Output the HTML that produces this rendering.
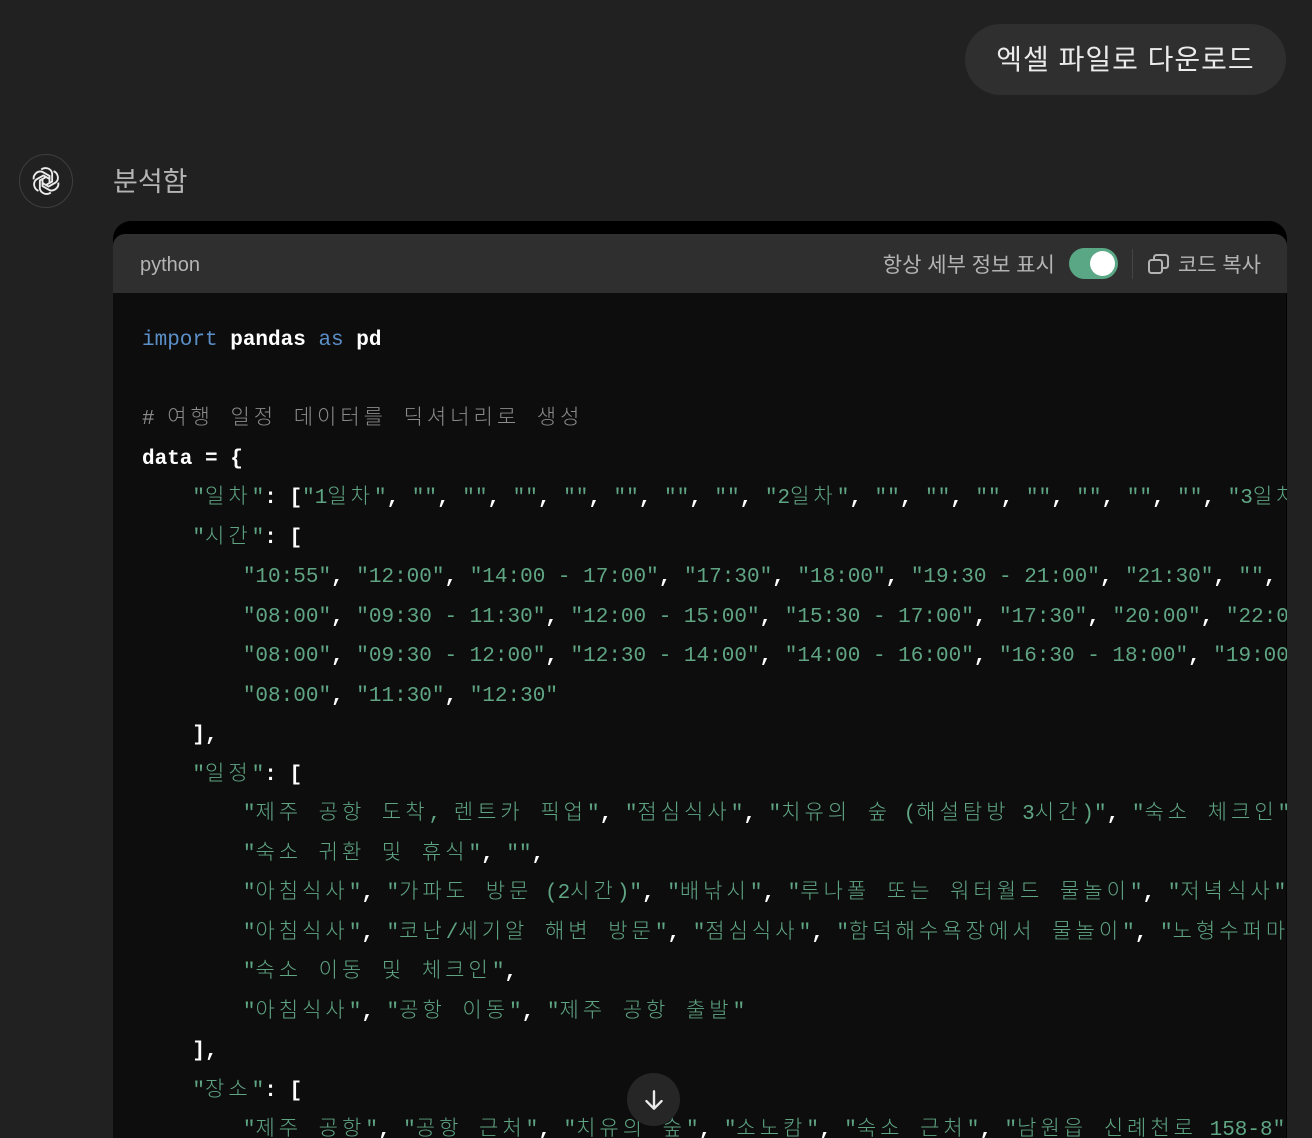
<!DOCTYPE html>
<html><head><meta charset="utf-8"><style>
html,body{margin:0;padding:0;background:#212121;width:1312px;height:1138px;overflow:hidden;font-family:"Liberation Sans","Noto Sans CJK KR",sans-serif;}
.bubble{position:absolute;left:965px;top:24px;width:321px;height:71px;border-radius:36px;background:#2f2f2f;color:#ececec;font-size:28px;line-height:71px;text-align:center;letter-spacing:1px}
.avatar{position:absolute;left:19px;top:154px;width:54px;height:54px;border-radius:50%;border:1px solid #3e3e3e;box-sizing:border-box;display:flex;align-items:center;justify-content:center}
.analyzed{position:absolute;left:113px;top:162px;color:#b4b4b4;font-size:27px;line-height:40px}
.box{position:absolute;left:113px;top:221px;width:1174px;height:917px;background:#000;border-radius:18px 18px 0 0;overflow:hidden}
.hdr{position:absolute;left:0;top:13px;width:1174px;height:59px;background:#2f2f2f;border-radius:12px 12px 0 0}
.lang{position:absolute;left:27px;top:2px;line-height:59px;color:#b4b4b4;font-size:20px}
.right{position:absolute;right:26px;top:0;height:59px;display:flex;align-items:center;color:#b4b4b4;font-size:21px}
.tog{width:49px;height:31px;border-radius:16px;background:#5aa786;position:relative;margin-left:14px}
.tog::after{content:"";position:absolute;right:3px;top:3px;width:25px;height:25px;border-radius:50%;background:#fff}
.sep{width:1px;height:30px;background:#454545;margin:0 14px}
.body{position:absolute;left:0;top:72px;width:1173px;height:900px;background:#0d0d0d}
pre{margin:0;position:absolute;left:29px;top:28px;font-family:"Liberation Mono","Noto Sans CJK KR",monospace;font-size:21px;line-height:39.5px;color:#fff;font-weight:bold;white-space:pre}
.s{color:#5fa584;font-weight:normal}.c{color:#8b8b8b;font-weight:normal}.kw{color:#5b8fc7;font-weight:normal}
.k{letter-spacing:4px;font-weight:300}
.down{position:absolute;left:627px;top:1073px;width:53px;height:53px;border-radius:50%;background:#262626;display:flex;align-items:center;justify-content:center}
</style></head><body>
<div class="bubble">엑셀 파일로 다운로드</div>
<div class="avatar"><svg width="32" height="32" viewBox="-12 -12 24 24" fill="none" stroke="#ececec" stroke-width="1.4" stroke-linejoin="round"><g id="p"><path d="M-3.6-8.6c2.8-2.2 7.4-1 8.2 2.8v6.2l-4.4 2.5"/></g><use href="#p" transform="rotate(60)"/><use href="#p" transform="rotate(120)"/><use href="#p" transform="rotate(180)"/><use href="#p" transform="rotate(240)"/><use href="#p" transform="rotate(300)"/></svg></div>
<div class="analyzed">분석함</div>
<div class="box">
<div class="hdr"><div class="lang">python</div>
<div class="right">항상 세부 정보 표시<div class="tog"></div><div class="sep"></div>
<svg width="24" height="24" viewBox="0 0 24 24" fill="none" stroke="#b4b4b4" stroke-width="2"><rect x="2" y="8" width="13" height="13" rx="2.5"/><path d="M7 8V5.5A2.5 2.5 0 0 1 9.5 3h9A2.5 2.5 0 0 1 21 5.5v8a2.5 2.5 0 0 1-2.5 2.5H15"/></svg>
<span style="margin-left:7px">코드 복사</span></div></div>
<div class="body">
<pre><span class="kw">import</span> pandas <span class="kw">as</span> pd

<span class="c"># <span class="k">여행 일정 데이터를 딕셔너리로 생성</span></span>
data = {
    <span class="s">"<span class="k">일차</span>"</span>: [<span class="s">"1<span class="k">일차</span>"</span>, <span class="s">""</span>, <span class="s">""</span>, <span class="s">""</span>, <span class="s">""</span>, <span class="s">""</span>, <span class="s">""</span>, <span class="s">""</span>, <span class="s">"2<span class="k">일차</span>"</span>, <span class="s">""</span>, <span class="s">""</span>, <span class="s">""</span>, <span class="s">""</span>, <span class="s">""</span>, <span class="s">""</span>, <span class="s">""</span>, <span class="s">"3<span class="k">일차</span>"</span>,
    <span class="s">"<span class="k">시간</span>"</span>: [
        <span class="s">"10:55"</span>, <span class="s">"12:00"</span>, <span class="s">"14:00 - 17:00"</span>, <span class="s">"17:30"</span>, <span class="s">"18:00"</span>, <span class="s">"19:30 - 21:00"</span>, <span class="s">"21:30"</span>, <span class="s">""</span>,
        <span class="s">"08:00"</span>, <span class="s">"09:30 - 11:30"</span>, <span class="s">"12:00 - 15:00"</span>, <span class="s">"15:30 - 17:00"</span>, <span class="s">"17:30"</span>, <span class="s">"20:00"</span>, <span class="s">"22:00"</span>,
        <span class="s">"08:00"</span>, <span class="s">"09:30 - 12:00"</span>, <span class="s">"12:30 - 14:00"</span>, <span class="s">"14:00 - 16:00"</span>, <span class="s">"16:30 - 18:00"</span>, <span class="s">"19:00"</span>,
        <span class="s">"08:00"</span>, <span class="s">"11:30"</span>, <span class="s">"12:30"</span>
    ],
    <span class="s">"<span class="k">일정</span>"</span>: [
        <span class="s">"<span class="k">제주 공항 도착</span>, <span class="k">렌트카 픽업</span>"</span>, <span class="s">"<span class="k">점심식사</span>"</span>, <span class="s">"<span class="k">치유의 숲</span> (<span class="k">해설탐방</span> 3<span class="k">시간</span>)"</span>, <span class="s">"<span class="k">숙소 체크인</span>"</span>,
        <span class="s">"<span class="k">숙소 귀환 및 휴식</span>"</span>, <span class="s">""</span>,
        <span class="s">"<span class="k">아침식사</span>"</span>, <span class="s">"<span class="k">가파도 방문</span> (2<span class="k">시간</span>)"</span>, <span class="s">"<span class="k">배낚시</span>"</span>, <span class="s">"<span class="k">루나폴 또는 워터월드 물놀이</span>"</span>, <span class="s">"<span class="k">저녁식사</span>"</span>,
        <span class="s">"<span class="k">아침식사</span>"</span>, <span class="s">"<span class="k">코난</span>/<span class="k">세기알 해변 방문</span>"</span>, <span class="s">"<span class="k">점심식사</span>"</span>, <span class="s">"<span class="k">함덕해수욕장에서 물놀이</span>"</span>, <span class="s">"<span class="k">노형수퍼마켙</span>"</span>,
        <span class="s">"<span class="k">숙소 이동 및 체크인</span>"</span>,
        <span class="s">"<span class="k">아침식사</span>"</span>, <span class="s">"<span class="k">공항 이동</span>"</span>, <span class="s">"<span class="k">제주 공항 출발</span>"</span>
    ],
    <span class="s">"<span class="k">장소</span>"</span>: [
        <span class="s">"<span class="k">제주 공항</span>"</span>, <span class="s">"<span class="k">공항 근처</span>"</span>, <span class="s">"<span class="k">치유의 숲</span>"</span>, <span class="s">"<span class="k">소노캄</span>"</span>, <span class="s">"<span class="k">숙소 근처</span>"</span>, <span class="s">"<span class="k">남원읍 신례천로</span> 158-8"</span>,
</pre>
</div>
</div>
<div class="down"><svg width="26" height="26" viewBox="0 0 24 24" fill="none" stroke="#ececec" stroke-width="2.2" stroke-linecap="round" stroke-linejoin="round"><path d="M12 4v16M5 13l7 7 7-7"/></svg></div>
</body></html>
